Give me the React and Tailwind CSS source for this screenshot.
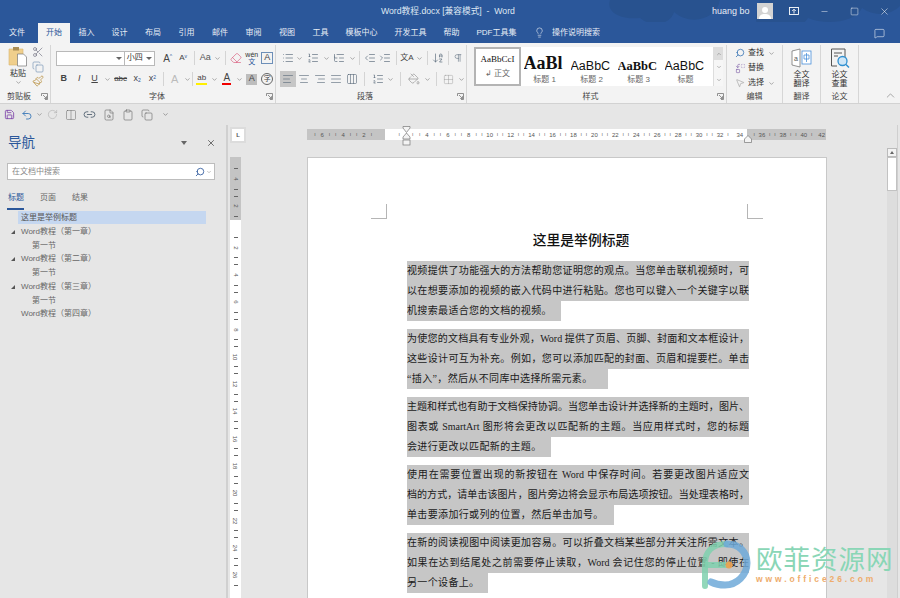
import {
  AlignCenter, AlignJustify, AlignLeft, AlignRight, ArrowDownAZ, ChevronDown, ChevronUp, Columns2, Copy,
  Eraser, FileSearch, Grid2x2, IndentDecrease, IndentIncrease, Lightbulb, Link2, List, ListOrdered, ListTree,
  MessageSquare, Minus, MousePointer2, PaintBucket, Paintbrush, Pilcrow, Replace, RotateCw, Save, Scissors,
  Search, Square, Undo2, X, Columns3, Clipboard, Copy as Pages,
} from "lucide-react";

const sans = "[font-family:'Liberation_Sans','Noto_Sans_CJK_SC',sans-serif]";

const tabs = [
  ["文件", "w-[38px] pr-[4px]"],
  ["开始", "w-[32px] bg-[#f3f3f3] text-[#2b579a]"],
  ["插入", "w-[33px]"],
  ["设计", "w-[33px]"],
  ["布局", "w-[34px]"],
  ["引用", "w-[33px]"],
  ["邮件", "w-[34px]"],
  ["审阅", "w-[33px]"],
  ["视图", "w-[34px]"],
  ["工具", "w-[33px]"],
  ["模板中心", "w-[49px]"],
  ["开发工具", "w-[49px]"],
  ["帮助", "w-[33px]"],
  ["PDF工具集", "w-[57px]"],
];

const paragraphs = [
  [
    ["视频提供了功能强大的方法帮助您证明您的观点。当您单击联机视频时，可"],
    ["以在想要添加的视频的嵌入代码中进行粘贴。您也可以键入一个关键字以联"],
    ["机搜索最适合您的文档的视频。", "w-[154px]"],
  ],
  [
    ["为使您的文档具有专业外观，Word 提供了页眉、页脚、封面和文本框设计，"],
    ["这些设计可互为补充。例如，您可以添加匹配的封面、页眉和提要栏。单击"],
    ["“插入”，然后从不同库中选择所需元素。", "w-[201px]"],
  ],
  [
    ["主题和样式也有助于文档保持协调。当您单击设计并选择新的主题时，图片、"],
    ["图表或 SmartArt 图形将会更改以匹配新的主题。当应用样式时，您的标题"],
    ["会进行更改以匹配新的主题。", "w-[144px]"],
  ],
  [
    ["使用在需要位置出现的新按钮在 Word 中保存时间。若要更改图片适应文"],
    ["档的方式，请单击该图片，图片旁边将会显示布局选项按钮。当处理表格时，"],
    ["单击要添加行或列的位置，然后单击加号。", "w-[207px]"],
  ],
  [
    ["在新的阅读视图中阅读更加容易。可以折叠文档某些部分并关注所需文本。"],
    ["如果在达到结尾处之前需要停止读取，Word 会记住您的停止位置 - 即使在"],
    ["另一个设备上。", "w-[81px]"],
  ],
];

const outline = [
  ["Word教程（第一章）", 1],
  ["第一节", 2],
  ["Word教程（第二章）", 1],
  ["第一节", 2],
  ["Word教程（第三章）", 1],
  ["第一节", 2],
  ["Word教程（第四章）", 0],
];

function Chev() {
  return (
    <span className="flex w-[10px] justify-center text-[#777]">
      <ChevronDown size={7} strokeWidth={2} />
    </span>
  );
}

function Sep({ w = "w-[8px]" }) {
  return (
    <span className={`flex justify-center ${w}`}>
      <span className="h-[14px] w-px bg-[#d4d4d4]" />
    </span>
  );
}

function Cell({ w = "w-[16px]", className = "", children }) {
  return <span className={`flex h-[16px] items-center justify-center ${w} ${className}`}>{children}</span>;
}

function Launcher() {
  return (
    <svg width="7" height="7" viewBox="0 0 7 7" fill="none" stroke="#777" strokeWidth="0.8">
      <path d="M0.5 3V0.5H6.5V6.5H4" />
      <path d="M2 2L5.5 5.5M5.5 3.2V5.5H3.2" />
    </svg>
  );
}

function Group({ label, w, launcher, children }) {
  return (
    <div className={`flex h-full shrink-0 flex-col border-r border-[#d6d6d6] ${w}`}>
      <div className="h-[47px]">{children}</div>
      <div className={`relative flex h-[13px] items-center justify-center text-[8px] leading-none text-[#444] ${launcher ? "pr-[12px]" : ""}`}>
        {label}
        {launcher && (
          <span className="absolute right-[2px] top-[3px]">
            <Launcher />
          </span>
        )}
      </div>
    </div>
  );
}

function StyleItem({ sample, name, className }) {
  return (
    <div className="flex w-[47px] shrink-0 flex-col items-center overflow-hidden">
      <div className={`flex h-[23px] w-[42px] items-end overflow-hidden whitespace-nowrap leading-none text-[#111] ${className}`}>
        {sample}
      </div>
      <div className="mt-[4px] text-[8px] leading-none text-[#666]">{name}</div>
    </div>
  );
}

function RulerMark({ n }) {
  return (
    <span className="flex w-[20.94px] shrink-0 items-center justify-around text-[5px] leading-none text-[#555]">
      <span>ı</span>
      <span className="text-[6px]">{n}</span>
      <span>ı</span>
    </span>
  );
}

function VMark({ n }) {
  return (
    <div className="flex h-[27.3px] shrink-0 flex-col items-center justify-between py-[3px]">
      <span className="h-px w-[4px] bg-[#666]" />
      <span className="rotate-90 text-[6px] leading-none text-[#555]">{n}</span>
      <span className="h-px w-[4px] bg-[#666]" />
    </div>
  );
}

function App() {
  return (
    <div className={`flex h-[598px] w-[900px] flex-col overflow-hidden bg-[#e6e6e6] ${sans}`}>
      {/* title bar */}
      <div className="relative flex h-[22px] shrink-0 items-center bg-[#2b579a] text-white">
        <svg className="absolute right-0 top-0" width="330" height="43" viewBox="0 0 330 43" fill="#28528f">
          <path d="M40 0C36 12 50 20 70 18C84 30 102 22 104 12C120 26 146 20 150 0Z" />
          <path d="M190 0C186 12 180 30 200 30C214 36 232 28 238 18C256 26 286 22 292 8C306 18 322 14 330 6V0Z" />
        </svg>
        <div className="relative ml-[381px] w-[200px] whitespace-pre text-[8.7px] leading-none text-[#dfe7f3]">
          Word教程.docx [兼容模式]  -  Word
        </div>
        <div className="relative ml-[131px] text-[9px] leading-none text-[#e8edf5]">huang bo</div>
        <div className="relative ml-[7px] flex h-[16px] w-[16px] items-end justify-center overflow-hidden bg-[#d3d3d3]">
          <svg width="14" height="14" viewBox="0 0 14 14" fill="#fff">
            <circle cx="7" cy="5" r="3" />
            <path d="M1 14C1 10 4 9 7 9C10 9 13 10 13 14Z" />
          </svg>
        </div>
        <svg className="relative ml-[16px]" width="10" height="8" viewBox="0 0 10 8" fill="none" stroke="#fff" strokeWidth="0.9">
          <rect x="0.5" y="0.5" width="9" height="7" />
          <path d="M5 6.5V2.5M3.2 4L5 2.2L6.8 4" />
        </svg>
        <Minus className="relative ml-[21px]" size={9} strokeWidth={1.2} />
        <Square className="relative ml-[21px]" size={9} strokeWidth={1.2} />
        <X className="relative ml-[20px]" size={11} strokeWidth={1.1} />
      </div>

      {/* tabs */}
      <div className="relative flex h-[21px] shrink-0 items-end bg-[#2b579a] text-[8px] leading-none text-[#e8edf5]">
        {tabs.map(([t, c]) => (
          <div key={t} className={`flex h-[20px] items-center justify-center ${c}`}>
            {t}
          </div>
        ))}
        <Lightbulb className="ml-[9px] mb-[5px] text-white" size={11} strokeWidth={1.2} />
        <div className="ml-[7px] flex h-[20px] items-center">操作说明搜索</div>
        <MessageSquare className="ml-[274px] mb-[4px] text-white" size={11} strokeWidth={1.2} />
      </div>

      {/* ribbon */}
      <div className="flex h-[61px] shrink-0 items-stretch border-b border-[#d2d2d2] bg-[#f3f3f3] pt-[2px]">
        <Group label="剪贴板" w="w-[51px]" launcher>
          <div className="flex h-full">
            <div className="ml-[8px] flex w-[20px] flex-col items-center pt-[1px]">
              <svg width="20" height="21" viewBox="0 0 20 21">
                <path d="M1 3H15V19H1Z" fill="#f0cf8c" stroke="#d9b670" strokeWidth="0.6" />
                <rect x="5" y="1" width="6" height="3.5" fill="#a98d55" />
                <path d="M9.5 8H15.5L18.5 11V20H9.5Z" fill="#fff" stroke="#777" strokeWidth="0.7" />
              </svg>
              <span className="mt-[3px] text-[8px] leading-none text-[#333]">粘贴</span>
              <ChevronDown className="mt-[1px] text-[#777]" size={7} />
            </div>
            <div className="ml-[4px] flex flex-col gap-[2.5px] pt-[1px]">
              <Scissors size={12} strokeWidth={1.2} className="text-[#667]" />
              <Copy size={12} strokeWidth={1.2} className="text-[#6a8bb0]" />
              <Paintbrush size={12} strokeWidth={1.4} className="text-[#b58a35]" />
            </div>
          </div>
        </Group>

        <Group label="字体" w="w-[225px]" launcher>
          <div className="flex flex-col pl-[5px] pt-[5px]">
            <div className="flex items-center">
              <div className="flex h-[15px] w-[71px] items-center justify-end border border-[#b9b9b9] bg-white pr-[2px]">
                <span className="border-x-[3px] border-t-[3px] border-x-transparent border-t-[#666]" />
              </div>
              <div className="flex h-[15px] w-[31px] items-center justify-between border-y border-r border-[#b9b9b9] bg-white px-[2px] text-[8px] text-[#333]">
                小四
                <span className="border-x-[3px] border-t-[3px] border-x-transparent border-t-[#666]" />
              </div>
              <Cell className="ml-[5px] text-[10px] text-[#444]">A<sup className="text-[5px] text-[#2b579a]">^</sup></Cell>
              <Cell className="text-[8px] text-[#444]">A<sup className="text-[5px] text-[#2b579a]">v</sup></Cell>
              <Sep w="w-[7px]" />
              <Cell className="text-[9px] text-[#555]">Aa</Cell>
              <Chev />
              <Sep w="w-[6px]" />
              <Cell><Eraser size={12} strokeWidth={1.3} className="text-[#d9587a]" /></Cell>
              <Cell className="text-[7px] leading-[7px] text-[#333]"><span className="text-center">wén<br /><span className="text-[#2b579a]">文</span></span></Cell>
              <Cell><span className="flex h-[12px] w-[12px] items-center justify-center border border-[#6d8fb8] text-[9px] text-[#444]">A</span></Cell>
            </div>
            <div className="mt-[5px] flex items-center text-[9px] text-[#444]">
              <Cell className="font-bold">B</Cell>
              <Cell className="italic">I</Cell>
              <Cell className="underline">U</Cell>
              <Chev />
              <Cell w="w-[18px]" className="text-[8px] line-through">abc</Cell>
              <Cell>x<sub className="text-[5px] text-[#2b579a]">2</sub></Cell>
              <Cell>x<sup className="text-[5px] text-[#2b579a]">2</sup></Cell>
              <Sep w="w-[7px]" />
              <Cell className="text-[11px] text-[#bbb]">A</Cell>
              <Chev />
              <Sep w="w-[2px]" />
              <Cell><span className="border-b-[2px] border-[#ffef00] px-[1px] text-[8px] leading-[10px]">ab</span></Cell>
              <Chev />
              <Cell><span className="border-b-[2px] border-[#f00000] px-[1px] text-[10px] leading-[10px]">A</span></Cell>
              <Chev />
              <Cell><span className="flex h-[11px] w-[11px] items-center justify-center bg-[#bdbdbd] text-[9px]">A</span></Cell>
              <Cell><span className="flex h-[12px] w-[12px] items-center justify-center rounded-full border border-[#666] text-[7px]">字</span></Cell>
            </div>
          </div>
        </Group>

        <Group label="段落" w="w-[191px]" launcher>
          <div className="flex flex-col pl-[4px] pt-[5px] text-[#567]">
            <div className="flex items-center">
              <Cell><List size={12} strokeWidth={1.3} /></Cell>
              <Chev />
              <Cell w="w-[18px]"><ListOrdered size={12} strokeWidth={1.3} /></Cell>
              <Chev />
              <Cell w="w-[18px]"><ListTree size={12} strokeWidth={1.3} /></Cell>
              <Chev />
              <Sep w="w-[6px]" />
              <Cell><IndentDecrease size={12} strokeWidth={1.3} /></Cell>
              <Cell><IndentIncrease size={12} strokeWidth={1.3} /></Cell>
              <Sep w="w-[7px]" />
              <Cell className="text-[8px] text-[#444]">文A</Cell>
              <Chev />
              <Sep w="w-[7px]" />
              <Cell><ArrowDownAZ size={12} strokeWidth={1.3} /></Cell>
              <Sep w="w-[6px]" />
              <Cell><Pilcrow size={10} strokeWidth={1.3} /></Cell>
            </div>
            <div className="mt-[5px] flex items-center">
              <Cell className="bg-[#c6c6c6]"><AlignLeft size={12} strokeWidth={1.2} /></Cell>
              <Cell><AlignCenter size={12} strokeWidth={1.2} /></Cell>
              <Cell><AlignRight size={12} strokeWidth={1.2} /></Cell>
              <Cell><AlignJustify size={12} strokeWidth={1.2} /></Cell>
              <Cell><Columns3 size={12} strokeWidth={1.2} /></Cell>
              <Sep w="w-[10px]" />
              <Cell><ListOrdered size={12} strokeWidth={1.3} /></Cell>
              <Chev />
              <Sep w="w-[11px]" />
              <Cell><PaintBucket size={12} strokeWidth={1.2} className="text-[#888]" /></Cell>
              <Chev />
              <Sep />
              <Cell><Grid2x2 size={11} strokeWidth={1} className="text-[#999]" /></Cell>
              <Chev />
            </div>
          </div>
        </Group>

        <Group label="样式" w="w-[260px]" launcher>
          <div className="flex pl-[7px] pt-[2px]">
            <div className="flex h-[39px] w-[239px] items-center overflow-hidden bg-white">
              <div className="flex h-[39px] w-[47px] shrink-0 flex-col items-center border-[2px] border-[#b4b4b4]">
                <div className="mt-[6px] text-[9px] leading-none text-[#111] [font-family:'Liberation_Serif',serif]">AaBbCcI</div>
                <div className="mt-[6px] text-[8px] leading-none text-[#666]">↲ 正文</div>
              </div>
              <StyleItem name="标题 1" sample="AaBl" className="text-[18px] font-bold [font-family:'Liberation_Serif',serif]" />
              <StyleItem name="标题 2" sample="AaBbC" className="text-[12.5px]" />
              <StyleItem name="标题 3" sample="AaBbC" className="text-[12.5px] font-bold [font-family:'Liberation_Serif',serif]" />
              <StyleItem name="标题" sample="AaBbC" className="text-[12.5px]" />
            </div>
            <div className="flex h-[39px] w-[10px] flex-col border-l border-[#ddd] bg-[#f6f6f6] text-[#777]">
              <span className="flex flex-1 items-center justify-center bg-[#ddd]"><ChevronUp size={6} /></span>
              <span className="flex flex-1 items-center justify-center"><ChevronDown size={6} /></span>
              <span className="flex flex-1 items-center justify-center"><ChevronDown size={6} /></span>
            </div>
          </div>
        </Group>

        <Group label="编辑" w="w-[56px]">
          <div className="flex flex-col gap-[1px] pl-[8px] pt-[1px] text-[8px] leading-none text-[#333]">
            <div className="flex h-[14px] items-center gap-[2px]">
              <Search size={10} strokeWidth={1.8} className="-scale-x-100 text-[#2b6cb0]" />
              <span className="ml-[1px]">查找</span>
              <Chev />
            </div>
            <div className="flex h-[14px] items-center gap-[2px]">
              <Replace size={11} strokeWidth={1.3} className="text-[#7a5aa6]" />
              <span>替换</span>
            </div>
            <div className="flex h-[14px] items-center gap-[2px]">
              <MousePointer2 size={10} strokeWidth={1} className="text-[#777]" />
              <span className="ml-[1px]">选择</span>
              <Chev />
            </div>
          </div>
        </Group>

        <Group label="翻译" w="w-[38px]">
          <div className="flex flex-col items-center pt-[3px] text-[8px] leading-[9px] text-[#333]">
            <svg width="21" height="20" viewBox="0 0 21 20" fill="none">
              <path d="M1 3L9 1V19L1 17Z" fill="#fff" stroke="#777" strokeWidth="0.8" />
              <text x="3" y="13" fontSize="7" fill="#555">a</text>
              <rect x="11" y="3" width="9" height="13" fill="#fff" stroke="#4a90d9" strokeWidth="0.8" />
              <path d="M15.5 5V14M13 7H18V11H13Z" stroke="#4a90d9" strokeWidth="0.8" />
            </svg>
            <span className="mt-[2px]">全文</span>
            <span>翻译</span>
          </div>
        </Group>

        <Group label="论文" w="w-[38px]">
          <div className="flex flex-col items-center pt-[3px] text-[8px] leading-[9px] text-[#333]">
            <svg width="20" height="20" viewBox="0 0 20 20" fill="none">
              <path d="M1.5 1H15V9M7 18H1.5V1" stroke="#555" strokeWidth="1" />
              <path d="M4 5H12M4 8H8" stroke="#555" strokeWidth="1" />
              <circle cx="12.5" cy="13" r="4.5" fill="#cfe6f7" stroke="#2f8fd0" strokeWidth="1.3" />
              <path d="M16 16.5L19 19.5" stroke="#2f8fd0" strokeWidth="1.5" />
            </svg>
            <span className="mt-[2px]">论文</span>
            <span>查重</span>
          </div>
        </Group>

        <div className="flex flex-1 items-end justify-end pb-[1px] pr-[3px] text-[#666]">
          <ChevronUp size={13} strokeWidth={1} />
        </div>
      </div>

      {/* quick access */}
      <div className="flex h-[21px] shrink-0 items-center bg-[#e6e6e6] pl-[2px] text-[#666]">
        <Cell w="w-[15px]"><Save size={11} strokeWidth={1.8} className="text-[#7b3fa8]" /></Cell>
        <Cell w="w-[15px]" className="ml-[2px]"><Undo2 size={12} strokeWidth={1.8} className="text-[#3a78b8]" /></Cell>
        <Chev />
        <Cell w="w-[17px]"><RotateCw size={11} strokeWidth={1.2} className="text-[#aaa]" /></Cell>
        <Cell w="w-[19px]"><Columns2 size={12} strokeWidth={1} /></Cell>
        <Cell w="w-[19px]"><Link2 size={13} strokeWidth={1.5} className="text-[#456]" /></Cell>
        <Cell w="w-[19px]"><FileSearch size={12} strokeWidth={1.2} /></Cell>
        <Cell w="w-[19px]"><Clipboard size={12} strokeWidth={1.2} /></Cell>
        <Cell w="w-[19px]"><Pages size={12} strokeWidth={1.2} /></Cell>
        <Cell w="w-[18px]"><ChevronDown size={7} strokeWidth={2} /></Cell>
      </div>

      {/* main */}
      <div className="flex min-h-0 flex-1">
        {/* navigation pane */}
        <div className="w-[226px] shrink-0 text-[8px] leading-none">
          <div className="flex h-[35px] items-center pl-[8px] pt-[1px]">
            <span className="text-[13.5px] text-[#2b579a]">导航</span>
            <span className="ml-[146px] border-x-[3px] border-t-[4px] border-x-transparent border-t-[#666]" />
            <X className="ml-[19px] text-[#555]" size={10} strokeWidth={2} />
          </div>
          <div className="mx-[7px] mt-[3px] flex h-[17px] w-[208px] items-center border border-[#bdbdbd] bg-white pl-[4px] pr-[2px] text-[#888]">
            在文档中搜索
            <Search className="ml-auto -scale-x-100 text-[#2b579a]" size={10} strokeWidth={2} />
            <ChevronDown className="ml-[1px]" size={6} />
          </div>
          <div className="mt-[14px] flex pl-[8px] text-[#666]">
            <span className="relative w-[32px] pb-[6px] text-[#2b579a]">
              标题
              <span className="absolute bottom-[-2px] left-[-1px] h-[2px] w-[17px] bg-[#2b579a]" />
            </span>
            <span className="w-[32px]">页面</span>
            <span>结果</span>
          </div>
          <div className="mt-[3px] ml-[18px] flex h-[13px] w-[188px] items-center bg-[#c5d7f0] pl-[3px] text-[#555]">这里是举例标题</div>
          <div className="mt-[1px]">
            {outline.map(([t, kind], i) => (
              <div key={i} className={`flex h-[13.75px] items-center text-[#666] ${kind === 2 ? "pl-[32px]" : "pl-[21px]"}`}>
                {kind === 1 && <span className="ml-[-10px] mr-[6px] h-0 w-0 border-b-[4px] border-l-[4px] border-b-[#555] border-l-transparent" />}
                {t}
              </div>
            ))}
          </div>
        </div>
        <div className="w-[2px] shrink-0 bg-[#d0d0d0]" />

        {/* vertical ruler */}
        <div className="flex w-[79px] shrink-0 flex-col items-start pl-[2px]">
          <div className="mt-[2px] flex h-[16px] w-[16px] items-center justify-center border-[2px] border-[#dcdcdc] bg-white text-[6px] font-bold leading-none text-[#555]">L</div>
          <div className="mt-[14px] flex w-[11px] flex-1 flex-col items-center overflow-hidden bg-white">
            <div className="flex h-[63px] w-full shrink-0 flex-col items-center justify-end bg-[#c4c4c4]">
              <VMark n="4" />
              <VMark n="2" />
            </div>
            <div className="h-[14px] shrink-0" />
            {["2", "4", "6", "8", "10", "12", "14", "16", "18", "20", "22", "24", "26"].map((n) => (
              <VMark key={n} n={n} />
            ))}
          </div>
        </div>

        {/* document */}
        <div className="flex w-[520px] shrink-0 flex-col">
          <div className="relative mt-[4px] flex h-[11px] w-[519px] shrink-0">
            <div className="flex w-[78px] items-center justify-end bg-[#c4c4c4] pr-[10.5px]">
              {["6", "4", "2"].map((n) => <RulerMark key={n} n={n} />)}
            </div>
            <div className="flex w-[362px] items-center bg-white pl-[10.5px]">
              {["", "4", "6", "8", "10", "12", "14", "16", "18", "20", "22", "24", "26", "28", "30", "32"].map((n, i) => <RulerMark key={i} n={n} />)}
              <span className="ml-[6px] text-[6px] leading-none text-[#555]">34</span>
            </div>
            <div className="flex w-[79px] items-center bg-[#c4c4c4] pl-[4.5px]">
              {["36", "38", "40"].map((n) => <RulerMark key={n} n={n} />)}
              <span className="ml-[4px] text-[6px] leading-none text-[#555]">42</span>
            </div>
            {/* indent markers */}
            <svg className="absolute left-[95px] top-[-3px]" width="9" height="20" viewBox="0 0 9 20" fill="#f3f3f3" stroke="#777" strokeWidth="0.7">
              <path d="M1 0.5H8V2L4.5 6.5L1 2Z" />
              <path d="M4.5 7L8 11V13H1V11Z" />
              <rect x="1" y="14" width="7" height="5" />
            </svg>
            <svg className="absolute left-[437px] top-[6px]" width="8" height="8" viewBox="0 0 8 8" fill="#f3f3f3" stroke="#777" strokeWidth="0.7">
              <path d="M4 0.5L7.5 4V7.5H0.5V4Z" />
            </svg>
          </div>
          <div className="mt-[17px] flex-1 overflow-hidden border-x border-t border-[#c8c8c8] bg-white pt-[46px]">
            <div className="flex justify-between px-[63px]">
              <div className="h-[15px] w-[16px] border-b border-r border-[#b5b5b5]" />
              <div className="h-[15px] w-[16px] border-b border-l border-[#b5b5b5]" />
            </div>
            <div className="ml-[99px] w-[342px] [font-family:'Liberation_Serif','Noto_Sans_CJK_SC',serif]">
              <div className="mt-[11px] flex h-[21px] items-center justify-center pl-[6px] text-[13.8px] font-medium leading-none text-[#111]">这里是举例标题</div>
              <div className="mt-[10px] flex flex-col gap-[8px]">
                {paragraphs.map((lines, i) => (
                  <div key={i}>
                    {lines.map(([text, last]) => (
                      <div
                        key={text}
                        className={`h-[20px] overflow-hidden bg-[#c6c6c6] text-[10px] leading-[20px] text-[#1a1a1a] ${last ? `${last} whitespace-nowrap tracking-[0.35px]` : "w-[342px] text-justify [text-align-last:justify]"}`}
                      >
                        {text}
                      </div>
                    ))}
                  </div>
                ))}
              </div>
            </div>
          </div>
        </div>

        {/* scrollbar */}
        <div className="ml-[60px] mt-[23px] flex w-[10px] shrink-0 flex-col bg-[#dddddd]">
          <div className="flex h-[9px] items-center justify-center border border-[#bbb] bg-[#f3f3f3] text-[#666]">
            <span className="border-x-[2px] border-b-[3px] border-x-transparent border-b-[#666]" />
          </div>
          <div className="h-[34px] border border-[#c2c2c2] bg-white" />
        </div>
        <div className="flex-1 border-l border-[#cfcfcf]" />
      </div>

      {/* watermark */}
      <div className="pointer-events-none absolute left-[699px] top-[538px] flex items-start">
        <svg width="52" height="54" viewBox="0 0 52 54" fill="none">
          <path d="M6 48V26C6 14 13 6 27 6" stroke="#7fd0ae" strokeWidth="6" strokeLinecap="round" opacity="0.85" />
          <path d="M6 27H30" stroke="#7fd0ae" strokeWidth="6" opacity="0.85" />
          <path d="M28 6C40 6 48 14 48 25C48 37 38 47 26 47C20 47 16 46 12 44" stroke="#6ea9d8" strokeWidth="7" strokeLinecap="round" opacity="0.85" />
          <circle cx="30" cy="27" r="3.5" fill="#eda04b" opacity="0.9" />
        </svg>
        <div className="ml-[5px] mt-[9px] flex flex-col">
          <span className="text-[26.5px] leading-[27px] tracking-[1px] text-[#8ad6b6]">欧菲资源网</span>
          <span className="mt-[1px] whitespace-nowrap text-[8.5px] font-bold leading-none tracking-[2.9px] text-[#eeac6c]">www.office26.com</span>
        </div>
      </div>
    </div>
  );
}

export default App;
